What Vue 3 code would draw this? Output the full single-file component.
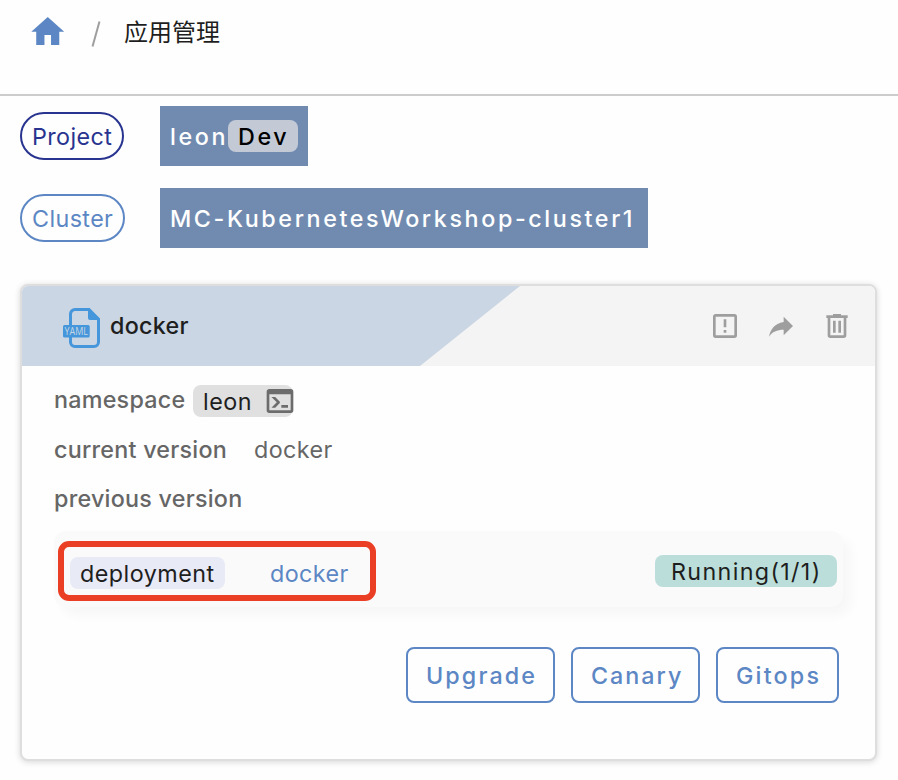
<script setup>
const home = 'M10,20V14H14V20H19V12H22L12,3L2,12H5V20H10Z'
const consoleIcon = 'M20,19V7H4V19H20M20,3A2,2 0 0,1 22,5V19A2,2 0 0,1 20,21H4A2,2 0 0,1 2,19V5C2,3.89 2.9,3 4,3H20M13,17V15H18V17H13M9.58,13L5.57,9H8.4L11.7,12.3C12.09,12.69 12.09,13.33 11.7,13.72L8.42,17H5.59L9.58,13Z'
const actions = [
  { name: 'alert', d: 'M19,19V5H5V19H19M19,3A2,2 0 0,1 21,5V19A2,2 0 0,1 19,21H5A2,2 0 0,1 3,19V5C3,3.89 3.9,3 5,3H19M11,7H13V13H11V7M11,15H13V17H11V15Z' },
  { name: 'share', d: 'M21,12L14,5V9C7,10 4,15 3,20C5.5,16.5 9,14.9 14,14.9V19L21,12Z' },
  { name: 'delete', d: 'M9,3V4H4V6H5V19A2,2 0 0,0 7,21H17A2,2 0 0,0 19,19V6H20V4H15V3H9M7,6H17V19H7V6M9,8V17H11V8H9M13,8V17H15V8H13Z' },
]
</script>

<template>
  <div class="page">
    <nav class="crumbs">
      <svg class="home" viewBox="0 0 24 24"><path :d="home" /></svg>
      <svg class="slash" viewBox="0 0 10 28"><path d="M8.5 1.5 1.5 26.5" /></svg>
      <span class="crumb">应用管理</span>
    </nav>

    <section class="scope">
      <div class="scope-row">
        <span class="chip project">Project</span>
        <div class="value leon"><span>leon</span><span class="env">Dev</span></div>
      </div>
      <div class="scope-row">
        <span class="chip cluster">Cluster</span>
        <div class="value wide"><span>MC-KubernetesWorkshop-cluster1</span></div>
      </div>
    </section>

    <article class="card">
      <header class="card-head">
        <svg class="yaml" viewBox="0 0 38 40">
          <path class="sheet" d="M26 1.5H12A4.5 4.5 0 0 0 7.5 6V34A4.5 4.5 0 0 0 12 38.5H31A4.5 4.5 0 0 0 35.5 34V11Z" />
          <path class="solid" d="M25 0 37 12H27A2 2 0 0 1 25 10Z" />
          <rect class="solid" x="0" y="17" width="26.7" height="12.5" rx="1.5" />
          <text x="1.6" y="26.8" textLength="23.4" lengthAdjust="spacingAndGlyphs">YAML</text>
        </svg>
        <h2 class="title">docker</h2>
        <div class="actions">
          <svg v-for="a in actions" :key="a.name" viewBox="0 0 24 24"><path :d="a.d" /></svg>
        </div>
      </header>

      <div class="body">
        <div class="line first">
          <span class="label ns">namespace</span>
          <span class="ns-pill"><span>leon</span><svg viewBox="0 0 24 24"><path :d="consoleIcon" /></svg></span>
        </div>
        <div class="line second">
          <span class="label cv">current version</span>
          <span class="version">docker</span>
        </div>
        <div class="line third"><span class="label pv">previous version</span></div>

        <div class="workload">
          <div class="marked">
            <span class="kind">deployment</span>
            <a class="link">docker</a>
          </div>
          <span class="status">Running(1/1)</span>
        </div>

        <footer class="buttons">
          <button class="btn upgrade">Upgrade</button>
          <button class="btn canary">Canary</button>
          <button class="btn gitops">Gitops</button>
        </footer>
      </div>
    </article>
  </div>
</template>

<style>
body { background: #fefefe; }
</style>

<style scoped>
.page, .page * { box-sizing: border-box; }
.page {
  width: 898px;
  height: 780px;
  overflow: hidden;
  background: #fefefe;
  color: #1e1e1e;
  font-family: Inter, "Noto Sans CJK SC", sans-serif;
  font-size: 23.3px;
  line-height: 32px;
  white-space: nowrap;
}
svg { display: block; flex: none; }
.crumbs {
  display: flex;
  align-items: flex-start;
  height: 96px;
  padding: 12px 0 0 28px;
  border-bottom: 2px solid #ccc;
}
.home { width: 39.5px; height: 39.5px; fill: #5c87c4; }
.slash { width: 10px; height: 28px; margin: 8px 0 0 23.5px; fill: none; stroke: #9e9e9e; stroke-width: 2; }
.crumb { margin: 3px 0 0 23px; font-family: "Noto Sans CJK SC", sans-serif; font-size: 24px; }
.scope { display: flex; flex-direction: column; gap: 22px; padding: 10px 20px 0; }
.scope-row { display: flex; align-items: center; height: 60px; }
.chip {
  height: 48px;
  border: 2px solid;
  border-radius: 24px;
  padding: 7px 0 0 10px;
  margin-right: 36px;
}
.project { width: 104px; color: #28348f; letter-spacing: 0.4px; }
.cluster { width: 105px; margin-right: 35px; color: #5c87c4; letter-spacing: 0.4px; }
.value {
  display: flex;
  align-items: center;
  height: 60px;
  padding: 0 10px;
  background: #718bb0;
  color: #fff;
  font-weight: 500;
  letter-spacing: 2.6px;
}
.value > span { padding-top: 2px; }
.leon { width: 148px; justify-content: space-between; }
.wide { width: 488px; }
.value > .env {
  width: 70px;
  height: 32px;
  padding: 1px 0 0 10px;
  border-radius: 8px;
  background: #c3cad6;
  color: #000;
}
.card {
  width: 857px;
  height: 477px;
  margin: 36px 0 0 20px;
  border: 2px solid #dedede;
  border-radius: 8px;
  background: #fefefe;
  box-shadow: 0 1px 6px rgba(0, 0, 0, 0.16);
}
.card-head {
  display: flex;
  align-items: center;
  height: 80px;
  padding: 0 22px 0 41px;
  border-radius: 6px 6px 0 0;
  background: #f4f4f4;
  position: relative;
}
.card-head::before {
  content: "";
  position: absolute;
  inset: 0;
  border-radius: 6px 0 0 0;
  background: #cad6e4;
  clip-path: polygon(0 0, 498px 0, 398px 80px, 0 80px);
}
.card-head > * { position: relative; }
.yaml { width: 38px; height: 40px; margin-top: 4px; }
.sheet { fill: none; stroke: #4596da; stroke-width: 3; }
.solid { fill: #4596da; }
.yaml text { font-family: "Open Sans", sans-serif; font-size: 10.5px; fill: #cad6e4; }
.title { margin: 0 0 0 9px; font-size: 23.3px; font-weight: 550; letter-spacing: 0.3px; }
.actions { display: flex; gap: 24px; margin-left: auto; }
.actions svg { width: 32px; height: 32px; fill: #9e9e9e; }
.body { padding: 19px 32px 0; color: #666; }
.line { display: flex; height: 32px; }
.second, .third { margin-top: 17px; }
.label { font-weight: 500; letter-spacing: 0.25px; }
.ns { width: 139px; margin-top: -1px; }
.cv { width: 200px; }
.version { letter-spacing: 0.4px; }
.ns-pill {
  display: flex;
  justify-content: space-between;
  width: 100px;
  height: 32px;
  padding-left: 10px;
  border-radius: 8px;
  background: #e0e0e0;
  color: #1e1e1e;
  letter-spacing: 0.5px;
}
.ns-pill > span { padding-top: 1px; }
.ns-pill svg { width: 32px; height: 32px; margin-right: -2.5px; fill: #6c6c6c; }
.workload {
  display: flex;
  justify-content: space-between;
  align-items: flex-start;
  width: 789px;
  height: 76px;
  margin-top: 16px;
  padding: 10px 6px 0 3.5px;
  border-radius: 12px;
  background: #fafafa;
  box-shadow: 8px 8px 12px rgba(0, 0, 0, 0.03);
}
.marked {
  display: flex;
  align-items: center;
  width: 318px;
  height: 60px;
  padding: 4px 0 0 6.5px;
  border: 6px solid #eb3f25;
  border-radius: 11px;
}
.kind {
  width: 155px;
  height: 32px;
  padding: 1px 0 0 10px;
  border-radius: 8px;
  background: #e8eaf6;
  color: #1e1e1e;
  letter-spacing: 0.5px;
}
.link { margin-left: 45px; padding-top: 1px; color: #5c87c4; letter-spacing: 0.4px; }
.status {
  width: 182px;
  height: 32px;
  margin-top: 14px;
  padding: 1px 0 0 16px;
  border-radius: 8px;
  background: #bbdeda;
  color: #1e1e1e;
  letter-spacing: 1.35px;
}
.buttons { display: flex; justify-content: flex-end; gap: 16px; margin-top: 40px; padding-right: 4px; }
.btn {
  height: 56px;
  padding: 2px 0 0 18px;
  border: 2px solid #5c87c4;
  border-radius: 8px;
  background: transparent;
  color: #5c87c4;
  font: 500 23.3px/32px Inter, sans-serif;
  letter-spacing: 2.1px;
  text-align: left;
}
.upgrade { width: 149px; }
.canary { width: 129px; letter-spacing: 2px; }
.gitops { width: 123px; letter-spacing: 2.2px; }
</style>
